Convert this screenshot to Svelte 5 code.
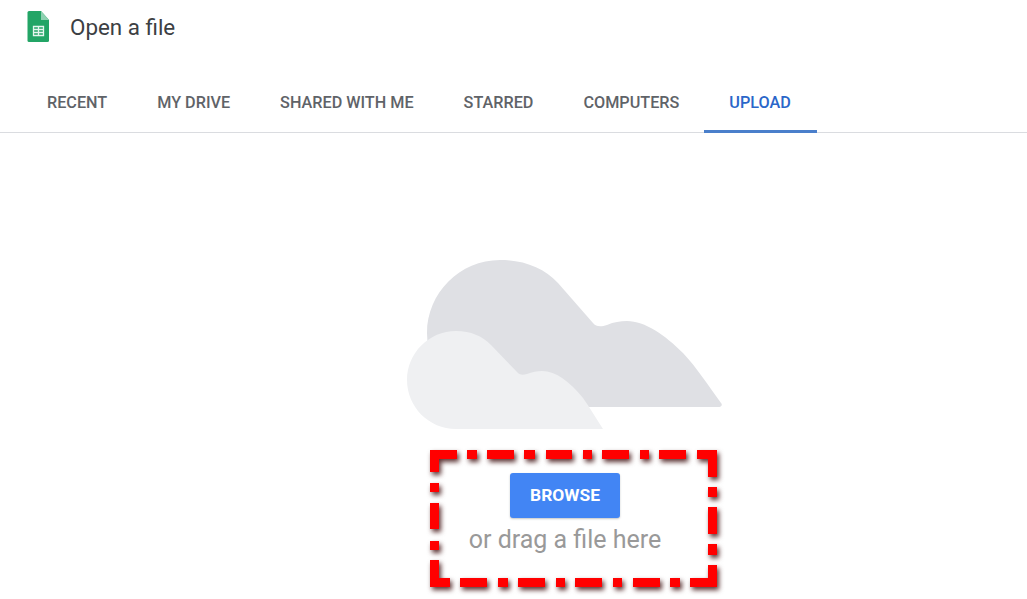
<script>
  const tabs = ['RECENT', 'MY DRIVE', 'SHARED WITH ME', 'STARRED', 'COMPUTERS', 'UPLOAD'];
  const top = [[430,457],[467,477],[487,514],[524,535],[546,572],[583,592],[602,629],[640,649],[659,686],[697,717]];
  const bottom = [[430,450],[460,487],[498,508],[518,545],[556,565],[575,602],[613,622],[633,660],[670,680],[690,717]];
  const left = [[450,472],[483,492],[503,529],[541,550],[560,587]];
  const right = [[450,477],[487,497],[507,534],[544,555],[565,587]];
  const dashes = [
    ...top.map(([a, b]) => `M${a} 454.5H${b}`),
    ...bottom.map(([a, b]) => `M${a} 582.5H${b}`),
    ...left.map(([a, b]) => `M434.5 ${a}V${b}`),
    ...right.map(([a, b]) => `M712.5 ${a}V${b}`)
  ].join('');
</script>

<div class="page">
  <header class="head">
    <svg class="logo" viewBox="27 12 23 32" aria-hidden="true">
      <path d="M29 12H41L49 21V41.500a1.500 1.500 0 0 1-1.500 1.500H29a1.500 1.500 0 0 1-1.500-1.500V13.500A1.500 1.500 0 0 1 29 12Z" fill="#23a566"/>
      <path d="M41 12L49 21H41Z" fill="#8ed1b1"/>
      <path d="M33.500 27.500H43.500V36.500H33.500ZM33.500 30.500H43.500M33.500 33.500H43.500M38.500 27.500V36.500" fill="none" stroke="#e6f5ee" stroke-width="1.300"/>
    </svg>
    <h1>Open a file</h1>
  </header>

  <nav class="tabs">
    {#each tabs as tab}
      <div class="tab" class:active={tab === 'UPLOAD'}>{tab}</div>
    {/each}
  </nav>

  <main class="upload">
    <svg class="cloud" viewBox="407 260 316 171" aria-hidden="true">
      <path fill="#dfe0e4" d="M427 333C427 293 460 260 500 260C524 260 544 268 558 283L593 323C596 327 601 327 607 325C614 322 620 321 627 321C645 321 665 335 683 353C697 368 708 385 721 403C723 405 721 407 718 407H500C460 407 427 373 427 333Z"/>
      <path fill="#eff0f2" d="M407 380C407 353 429 331 456 331C471 331 482 336 491 345L518 373C520 375 523 375 527 374C532 372 537 371 542 371C556 371 570 382 583 398C590 408 596 418 603 429H456C429 429 407 407 407 380Z"/>
    </svg>
    <button class="browse">BROWSE</button>
    <p class="hint">or drag a file here</p>
  </main>

  <svg class="marker" viewBox="0 0 1027 599" aria-hidden="true">
    <path d={dashes} fill="none" stroke="#ff0000" stroke-width="9"/>
  </svg>
</div>

<style>
  :global(body) {
    margin: 0;
    background: #fff;
  }
  .page {
    position: relative;
    width: 1027px;
    height: 599px;
    overflow: hidden;
    font-family: Roboto, "Liberation Sans", sans-serif;
  }
  .head {
    display: flex;
    align-items: center;
    gap: 20px;
    height: 54px;
    padding-left: 27px;
  }
  .logo {
    width: 23px;
    height: 32px;
    flex: none;
  }
  h1 {
    margin: 0;
    font-size: 22.4px;
    font-weight: 400;
    color: #3c4043;
  }
  .tabs {
    display: flex;
    height: 78px;
    padding-left: 22px;
    border-bottom: 1px solid #dadce0;
    box-sizing: content-box;
  }
  .tab {
    display: flex;
    align-items: center;
    height: 78px;
    box-sizing: border-box;
    padding: 18px 25px 0;
    font-size: 16.22px;
    font-weight: 500;
    color: #5f6368;
    white-space: nowrap;
  }
  .tab.active {
    color: #2a66c9;
    border-bottom: 3px solid #4a7fcb;
    height: 79px;
    padding-top: 20px;
    padding-right: 26px;
  }
  .upload {
    display: flex;
    flex-direction: column;
    align-items: center;
    padding: 127px 0 0 103px;
  }
  .cloud {
    display: block;
    width: 316px;
    height: 171px;
  }
  .browse {
    width: 110px;
    height: 45px;
    margin-top: 42px;
    padding: 0 0 1px;
    border: 0;
    border-radius: 3px;
    background: #4285f4;
    box-shadow: 0 1px 2px rgba(60, 64, 67, 0.3);
    color: #fff;
    font: 700 17.400px Roboto, "Liberation Sans", sans-serif;
  }
  .hint {
    margin: 5px 0 0;
    font-size: 25px;
    line-height: 33px;
    color: #999;
  }
  .marker {
    position: absolute;
    inset: 0;
    width: 1027px;
    height: 599px;
    filter: drop-shadow(2px 3px 2.500px rgba(50, 0, 0, 0.8));
    pointer-events: none;
  }
</style>
